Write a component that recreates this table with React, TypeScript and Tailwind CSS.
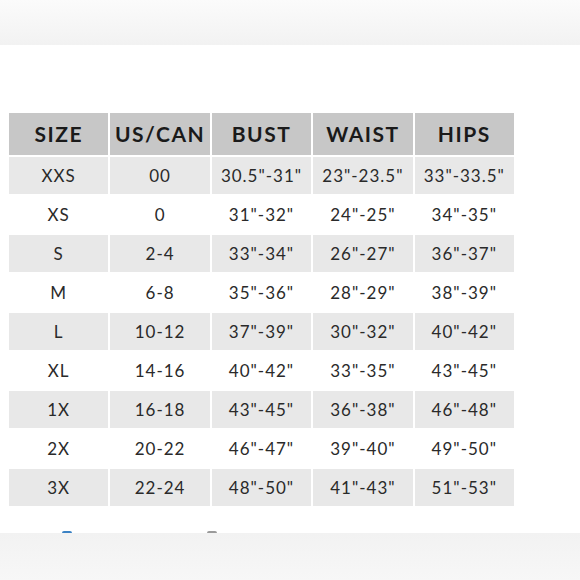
const headers = ["SIZE", "US/CAN", "BUST", "WAIST", "HIPS"];

const rows = [
  ["XXS", "00", '30.5"-31"', '23"-23.5"', '33"-33.5"'],
  ["XS", "0", '31"-32"', '24"-25"', '34"-35"'],
  ["S", "2-4", '33"-34"', '26"-27"', '36"-37"'],
  ["M", "6-8", '35"-36"', '28"-29"', '38"-39"'],
  ["L", "10-12", '37"-39"', '30"-32"', '40"-42"'],
  ["XL", "14-16", '40"-42"', '33"-35"', '43"-45"'],
  ["1X", "16-18", '43"-45"', '36"-38"', '46"-48"'],
  ["2X", "20-22", '46"-47"', '39"-40"', '49"-50"'],
  ["3X", "22-24", '48"-50"', '41"-43"', '51"-53"'],
];

export default function App() {
  return (
    <div className="w-[580px] h-[580px] bg-white flex flex-col overflow-hidden font-['Lato',sans-serif]">
      {/* top fade band */}
      <div className="h-[45px] shrink-0 bg-gradient-to-b from-[#fbfbfb] to-[#f2f2f2]" />

      {/* size chart */}
      <div className="mt-[68px] ml-[9px] w-[505px] flex flex-col gap-[2px]">
        <div className="grid grid-cols-5 gap-[2px]">
          {headers.map((h) => (
            <div
              key={h}
              className="h-[42px] bg-[#c7c7c7] flex items-center justify-center text-[21px] font-bold tracking-[1.5px] text-[#1a1a1a]"
            >
              {h}
            </div>
          ))}
        </div>
        {rows.map((row, i) => (
          <div key={row[0]} className="grid grid-cols-5 gap-[2px]">
            {row.map((cell, j) => (
              <div
                key={j}
                className={`h-[37px] flex items-center justify-center text-[17px] tracking-[1px] text-[#2a2a2a] ${
                  i % 2 === 0 ? "bg-[#e8e8e8]" : "bg-white"
                }`}
              >
                {cell}
              </div>
            ))}
          </div>
        ))}
      </div>

      {/* bottom fade band */}
      <div className="relative mt-[27px] flex-1 bg-gradient-to-b from-[#f2f2f2] to-[#f7f7f7]">
        <span className="absolute -top-[2px] left-[62px] w-[10px] h-[2px] rounded-t-full bg-[#3b82c4]" />
        <span className="absolute -top-[2px] left-[207px] w-[10px] h-[2px] rounded-t-full bg-[#9a9a9a]" />
      </div>
    </div>
  );
}
